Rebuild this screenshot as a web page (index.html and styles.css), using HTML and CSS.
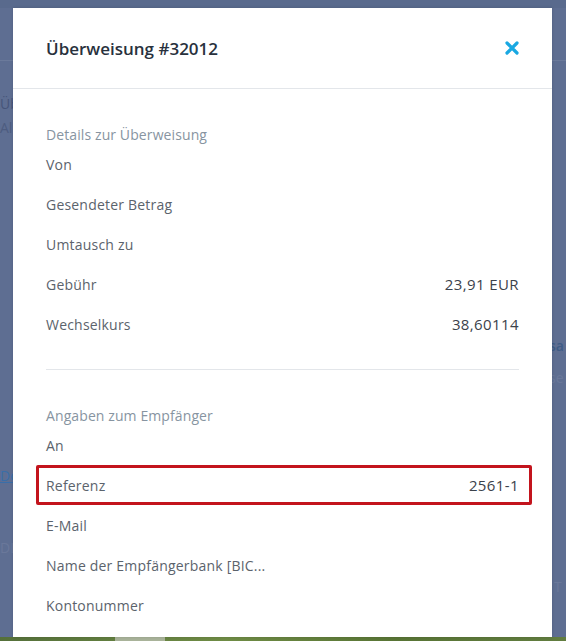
FILE: index.html
```html
<!DOCTYPE html>
<html>
<head>
  <meta name="viewport" content="width=device-width, initial-scale=1.0">
  <link rel="stylesheet" href="styles.css">
</head>
<body>
  <div class="page">
    <div class="page-top"></div>
    <div class="page-line line-1"></div>
    <div class="edge edge-left">
      <div class="edge-text text-1">Üb</div>
      <div class="edge-text text-2">Al</div>
      <div class="edge-text edge-link">De</div>
      <div class="edge-text text-3">DL</div>
    </div>
    <div class="edge edge-right">
      <div class="edge-text side-link">sa</div>
      <div class="edge-text side-text">se</div>
      <div class="edge-text text-4">T</div>
    </div>
    <div class="desktop"><div class="task"></div></div>
  </div>

  <div class="modal">
    <div class="modal-header">
      <div class="modal-title">Überweisung #32012</div>
      <svg class="close" width="14" height="14" viewBox="0 0 14 14">
        <path d="M2 2 L12 12 M12 2 L2 12" stroke="#19a8e2" stroke-width="3.2" stroke-linecap="round"/>
      </svg>
    </div>
    <div class="modal-body">
      <div class="section-title">Details zur Überweisung</div>
      <div class="row"><span class="label">Von</span><span class="value"></span></div>
      <div class="row"><span class="label">Gesendeter Betrag</span><span class="value"></span></div>
      <div class="row"><span class="label">Umtausch zu</span><span class="value"></span></div>
      <div class="row"><span class="label">Gebühr</span><span class="value">23,91 EUR</span></div>
      <div class="row"><span class="label">Wechselkurs</span><span class="value">38,60114</span></div>
      <div class="divider"></div>
      <div class="section-title">Angaben zum Empfänger</div>
      <div class="row"><span class="label">An</span><span class="value"></span></div>
      <div class="row row-marked"><span class="label">Referenz</span><span class="value">2561-1</span></div>
      <div class="row"><span class="label">E-Mail</span><span class="value"></span></div>
      <div class="row"><span class="label">Name der Empfängerbank [BIC...</span><span class="value"></span></div>
      <div class="row"><span class="label">Kontonummer</span><span class="value"></span></div>
    </div>
  </div>
</body>
</html>
```

FILE: styles.css
```css
* {
  margin: 0;
  padding: 0;
  box-sizing: border-box;
}

body {
  width: 566px;
  height: 641px;
  overflow: hidden;
  background: #5d6d91;
  font-family: "Open Sans", "Noto Sans", sans-serif;
}

/* Dimmed page behind the dialog */
.page {
  position: relative;
  width: 566px;
  height: 641px;
  background: #5e6e92;
}

.page-top {
  height: 8px;
  background: #596a8d;
}

.page-line {
  position: absolute;
  left: 0;
  right: 0;
  height: 1px;
  background: #6b7a9b;
}

.line-1 { top: 60px; }

.edge {
  position: absolute;
  top: 0;
  height: 637px;
  overflow: hidden;
  font-size: 14px;
  white-space: nowrap;
}

.edge-left { left: 0; width: 13px; }
.edge-right { left: 552px; width: 14px; }

.edge-text {
  position: absolute;
  left: 0;
  color: #46557a;
}

.text-1 { top: 94px; }
.text-2 { top: 118px; color: #4d5c80; }
.text-3 { top: 538px; color: #6a789a; }
.text-4 { top: 577px; left: 2px; color: #6a789a; }

.edge-link {
  top: 466px;
  color: #3a6ea8;
  text-decoration: underline;
}

.side-link { top: 336px; left: -3px; color: #3f5c86; font-weight: 600; }
.side-text { top: 368px; left: -3px; color: #6a789a; }

.desktop {
  position: absolute;
  left: 0;
  right: 0;
  bottom: 0;
  height: 4px;
  padding-left: 115px;
  background: linear-gradient(90deg, #55703a, #6f8c45 40%, #587435 70%, #627d40);
}

.task {
  width: 50px;
  height: 4px;
  background: #a9b39a;
}

/* Dialog */
.modal {
  position: absolute;
  top: 8px;
  left: 13px;
  width: 539px;
  height: 629px;
  background: #fff;
  overflow: hidden;
  box-shadow: 0 0 3px rgba(0, 0, 0, 0.15);
}

.modal-header {
  height: 81px;
  padding: 0 33px;
  display: flex;
  align-items: center;
  justify-content: space-between;
  border-bottom: 1px solid #e3e6ea;
}

.modal-title {
  font-size: 17px;
  font-weight: 600;
  color: #28313d;
}

.close {
  display: block;
}

.modal-body {
  padding: 34px 33px 0;
}

.section-title {
  height: 21px;
  padding-top: 3px;
  line-height: 18px;
  font-size: 14px;
  letter-spacing: 0.1px;
  color: #8794a1;
}

.row {
  height: 40px;
  display: flex;
  align-items: center;
  justify-content: space-between;
  font-size: 14px;
  letter-spacing: 0.2px;
}

.label {
  color: #5b636c;
}

.value {
  color: #3b424b;
  font-size: 15px;
  letter-spacing: 0.4px;
}

.row-marked {
  margin: 0 -13px 0 -10px;
  padding: 0 10px 0 7px;
  border: 3px solid #c3141d;
  border-radius: 2px;
}

.divider {
  height: 1px;
  background: #e3e6ea;
  margin: 25px 0 34px;
}
```
